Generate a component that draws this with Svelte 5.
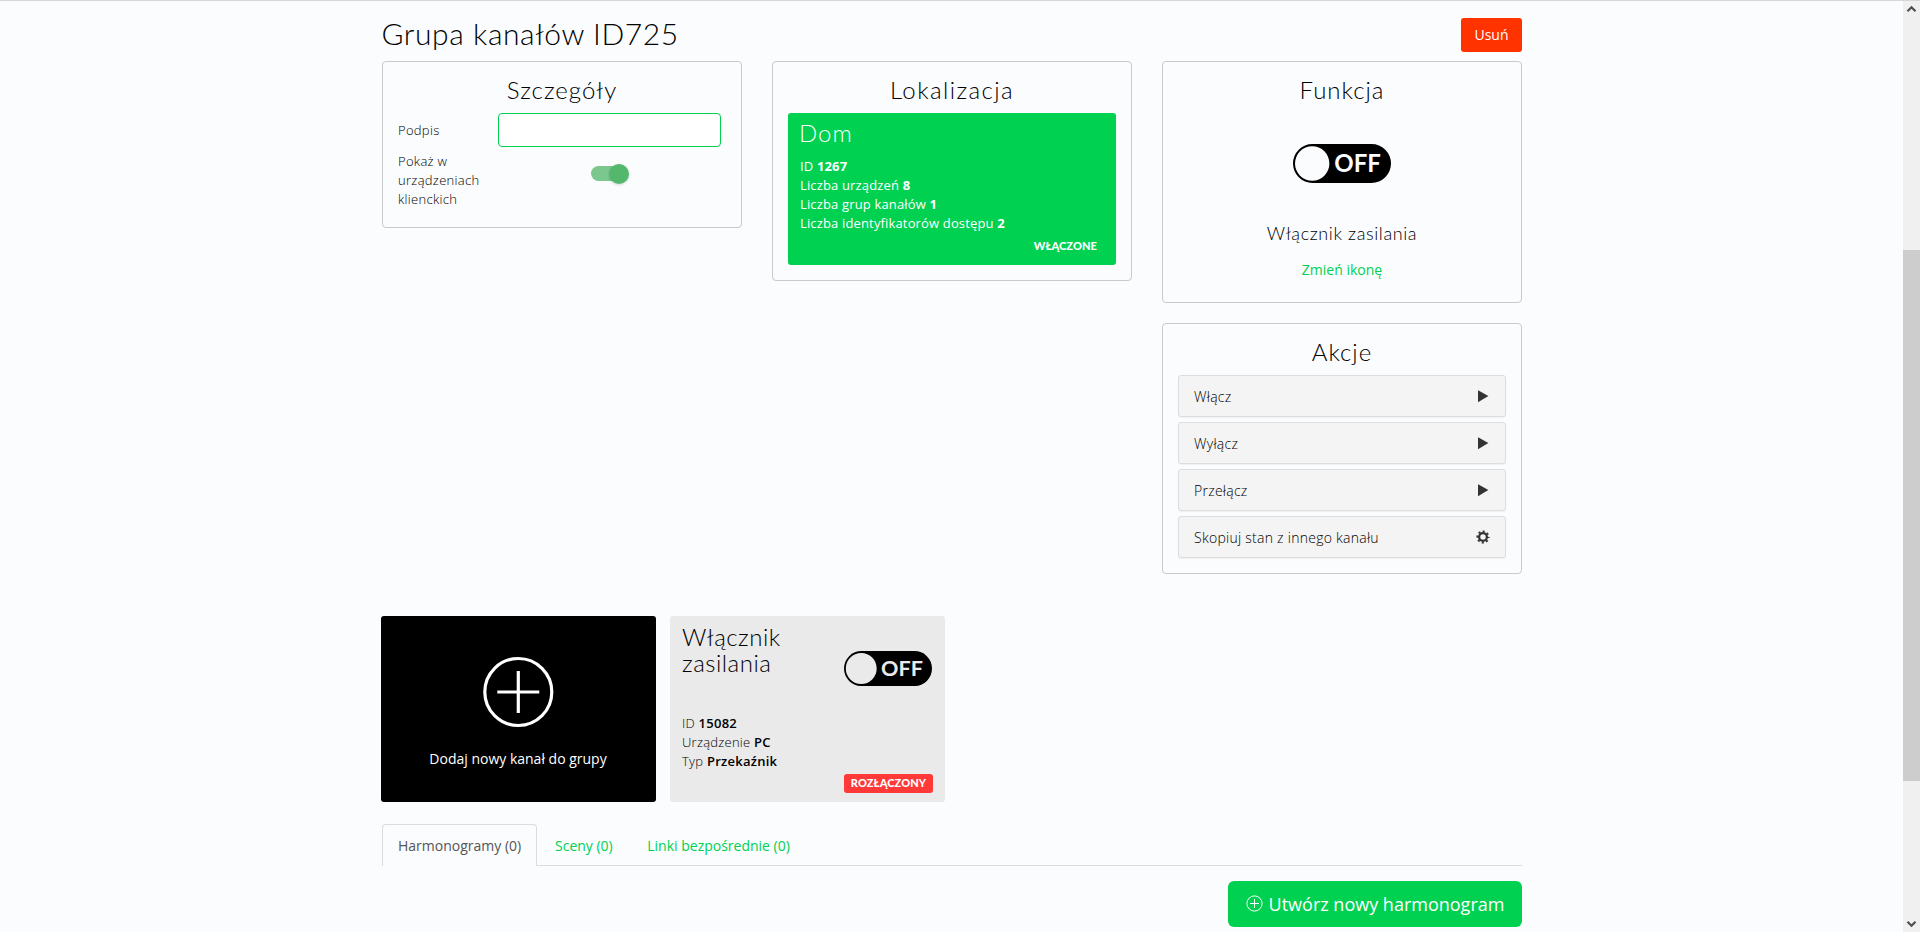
<script>
  const actions = [
    { label: 'Włącz', icon: 'play' },
    { label: 'Wyłącz', icon: 'play' },
    { label: 'Przełącz', icon: 'play' },
    { label: 'Skopiuj stan z innego kanału', icon: 'gear' }
  ];
  const location = [
    ['ID', '1267'],
    ['Liczba urządzeń', '8'],
    ['Liczba grup kanałów', '1'],
    ['Liczba identyfikatorów dostępu', '2']
  ];
  const channel = [
    ['ID', '15082'],
    ['Urządzenie', 'PC'],
    ['Typ', 'Przekaźnik']
  ];
</script>

{#snippet offIcon(width)}
  <svg class="off" {width} viewBox="0 0 98 39">
    <path fill="#000" fill-rule="evenodd" d="M19.5 0h59a19.5 19.5 0 0 1 0 39h-59a19.5 19.5 0 0 1 0-39zM19.2 2.3a17.2 17.2 0 1 0 0 34.4a17.2 17.2 0 1 0 0-34.4z" />
    <text x="41.3" y="28" textLength="46.5" lengthAdjust="spacing">OFF</text>
  </svg>
{/snippet}

<div class="window">
  <main>
    <header>
      <h1>Grupa kanałów ID725</h1>
      <button class="delete">Usuń</button>
    </header>

    <div class="columns">
      <section class="card details">
        <h2>Szczegóły</h2>
        <div class="field">
          <label for="caption">Podpis</label>
          <input id="caption" />
        </div>
        <div class="field show">
          <span class="label">Pokaż w urządzeniach klienckich</span>
          <div class="switch-cell"><span class="switch"><span class="knob"></span></span></div>
        </div>
      </section>

      <section class="card location">
        <h2>Lokalizacja</h2>
        <div class="tile green">
          <h3>Dom</h3>
          {#each location as [k, v]}
            <p>{k} <b>{v}</b></p>
          {/each}
          <span class="state">WŁĄCZONE</span>
        </div>
      </section>

      <div class="stack">
        <section class="card function">
          <h2>Funkcja</h2>
          {@render offIcon(98)}
          <h4>Włącznik zasilania</h4>
          <a href="#icon">Zmień ikonę</a>
        </section>
        <section class="card actions">
          <h2>Akcje</h2>
          <div class="list">
            {#each actions as a}
              <div class="action">
                <span>{a.label}</span>
                <svg width="14" height="14" viewBox="0 0 14 14">
                  {#if a.icon === 'play'}
                    <path fill="#333" d="M2 1.2L12.4 7L2 13.2z" />
                  {:else}
                    <g fill="none" stroke="#333">
                      <circle cx="7" cy="7" r="3.9" stroke-width="2.3" />
                      <circle cx="7" cy="7" r="5.6" stroke-width="1.9" stroke-dasharray="2.1 2.298" stroke-dashoffset="1.05" />
                    </g>
                  {/if}
                </svg>
              </div>
            {/each}
          </div>
        </section>
      </div>
    </div>

    <div class="tiles">
      <div class="tile add">
        <svg width="71" height="72" viewBox="0 0 71 72" fill="none" stroke="#fff" stroke-width="3.2">
          <circle cx="35.3" cy="36" r="33.5" />
          <path d="M35.3 15v42M14.3 36h42" />
        </svg>
        <span>Dodaj nowy kanał do grupy</span>
      </div>
      <div class="tile channel">
        <div class="top">
          <h3>Włącznik zasilania</h3>
          {@render offIcon(88)}
        </div>
        {#each channel as [k, v]}
          <p>{k} <b>{v}</b></p>
        {/each}
        <span class="badge">ROZŁĄCZONY</span>
      </div>
    </div>

    <nav>
      <span class="tab active">Harmonogramy (0)</span>
      <a class="tab" href="#scenes">Sceny (0)</a>
      <a class="tab" href="#links">Linki bezpośrednie (0)</a>
    </nav>

    <div class="create-row">
      <button class="create">
        <svg width="17" height="17" viewBox="0 0 17 17" fill="none" stroke="#fff" stroke-width="1"><circle cx="8.5" cy="8.5" r="7.6" /><path d="M8.5 4v9M4 8.5h9" /></svg>
        <span>Utwórz nowy harmonogram</span>
      </button>
    </div>
  </main>

  <div class="scrollbar">
    <svg width="11" height="8" viewBox="0 0 11 8"><path d="M1.5 6.2L5.5 2.2L9.5 6.2" fill="none" stroke="#505050" stroke-width="2.2" /></svg>
    <div class="thumb"></div>
    <svg width="11" height="8" viewBox="0 0 11 8"><path d="M1.5 1.8L5.5 5.8L9.5 1.8" fill="none" stroke="#505050" stroke-width="2.2" /></svg>
  </div>
</div>

<style>
  :global(body) { margin: 0; overflow: hidden; }
  .window { box-sizing: border-box; display: flex; height: 932px; width: 1920px; overflow: hidden; background: #fafcfe; border-top: 1px solid #d6d7d9; font: 300 14px/20px "Open Sans", sans-serif; color: #000; }
  .window *, .window *::before { box-sizing: border-box; }
  main { width: 1140px; margin: 0 381px 0 382px; flex: none; }
  h1, h2, h3, h4, p { margin: 0; font-weight: 300; }
  h1, h2, h3, h4 { font-family: Lato, sans-serif; color: #000; }
  a { color: #00d151; text-decoration: none; font-weight: 400; }
  button { border: 0; padding: 0; color: #fff; font: 400 14px/20px "Open Sans", sans-serif; }
  header { display: flex; justify-content: space-between; height: 60px; }
  h1 { font-size: 30px; line-height: 34px; padding-top: 15px; letter-spacing: 0.58px; margin-left: -0.5px; white-space: nowrap; }
  .delete { width: 61px; height: 34px; margin-top: 17px; border-radius: 3px; background: #f30; }
  .columns { display: flex; align-items: flex-start; justify-content: space-between; height: 555px; }
  .card { width: 360px; border: 1px solid #c8cacc; border-radius: 4px; padding: 15px; }
  .card h2 { text-align: center; font-size: 24px; line-height: 26px; height: 36px; letter-spacing: 1px; }
  .details { height: 167px; }
  .field { display: flex; font-size: 13px; line-height: 19px; letter-spacing: 0.3px; }
  .field label { width: 100px; padding-top: 8px; }
  input { width: 223px; height: 34px; border: 1px solid #00d151; border-radius: 4px; background: #fff; }
  .show { padding-top: 5px; }
  .label { width: 100px; }
  .switch-cell { width: 223px; padding: 14px 0 0; display: flex; justify-content: center; }
  .switch { width: 37px; height: 15px; border-radius: 8px; background: #7bc88f; display: flex; justify-content: flex-end; align-items: center; }
  .knob { flex: none; width: 20px; height: 20px; border-radius: 50%; background: #53b86c; margin-right: -1px; box-shadow: 0 1px 3px rgba(0, 0, 0, .15); }
  .location { height: 220px; }
  .card.location h2 { letter-spacing: 1.4px; }
  .tile { border-radius: 3px; }
  .tile h3 { font-size: 24px; line-height: 26px; }
  .tile p { font-size: 13px; line-height: 19px; letter-spacing: 0.25px; }
  .tile b { font-weight: 600; }
  .green { height: 152px; padding: 7px 12px; background: #00d151; color: #fff; display: flex; flex-direction: column; }
  .green h3 { color: #fff; height: 37px; margin-left: -1px; letter-spacing: 1px; }
  .green p { font-weight: 400; letter-spacing: 0.15px; }
  .green b { font-weight: 700; }
  .state, .badge { font: 900 11px/19px Lato, sans-serif; color: #fff; }
  .state { align-self: flex-end; margin: 3px 7px 0 0; letter-spacing: 0.1px; }
  .stack { display: flex; flex-direction: column; gap: 20px; }
  .function { height: 242px; display: flex; flex-direction: column; align-items: center; }
  .off { display: block; }
  .off text { fill: #fafcfe; font: 700 24px Lato, sans-serif; }
  .function .off { margin-top: 31px; }
  h4 { font-size: 18px; line-height: 20px; margin-top: 40px; letter-spacing: 0.6px; }
  .function a { margin-top: 17px; }
  .actions { height: 251px; }
  .list { display: flex; flex-direction: column; gap: 5px; }
  .action { height: 42px; padding: 0 15px; display: flex; align-items: center; justify-content: space-between; letter-spacing: 0.26px; background: #f4f4f4; border: 1px solid #dcdddf; border-radius: 3px; box-shadow: 0 1px 1px rgba(0, 0, 0, .05); }
  .action span { padding-top: 2px; }
  .tiles { display: flex; gap: 14px; margin-left: -1px; }
  .tiles .tile { width: 275px; height: 186px; }
  .add { background: #000; color: #fff; font-weight: 400; display: flex; flex-direction: column; align-items: center; padding: 40px 1px 0 0; }
  .add span { margin-top: 21px; }
  .channel { background: #eaeaea; padding: 8px 12px; display: flex; flex-direction: column; }
  .channel .off { margin: 27px 1px 0 0; }
  .channel .off text { fill: #eaeaea; }
  .top { display: flex; justify-content: space-between; align-items: flex-start; height: 90px; }
  .top h3 { width: 130px; letter-spacing: 0.5px; }
  .top h3::first-line { letter-spacing: 0.5px; }
  .badge { align-self: flex-end; margin-top: 3px; width: 89px; height: 19px; line-height: 18px; text-align: center; letter-spacing: 0.1px; border-radius: 3px; background: #ff3838; }
  nav { display: flex; gap: 1px; margin-top: 22px; height: 42px; border-bottom: 1px solid #dadcde; }
  .tab { padding: 11px 15.5px 0 16px; height: 42px; border: 1px solid transparent; border-bottom: 0; white-space: nowrap; }
  .tab.active { font-weight: 400; color: #555; background: #fafcfe; border-color: #dadcde; border-radius: 4px 4px 0 0; width: 155px; padding: 11px 15px 0; }
  .create-row { display: flex; justify-content: flex-end; padding-top: 15px; }
  .create { width: 294px; height: 46px; border-radius: 6px; background: #00d151; font-size: 18px; display: flex; justify-content: center; align-items: center; gap: 6px; white-space: nowrap; }
  .create svg { margin-bottom: 2px; }
  .scrollbar { flex: none; width: 17px; height: 931px; background: #f0f0f0; display: flex; flex-direction: column; align-items: center; padding: 4px 0; }
  .thumb { width: 17px; height: 531px; background: #cdcdcd; margin: 237px 0 auto; }
</style>
